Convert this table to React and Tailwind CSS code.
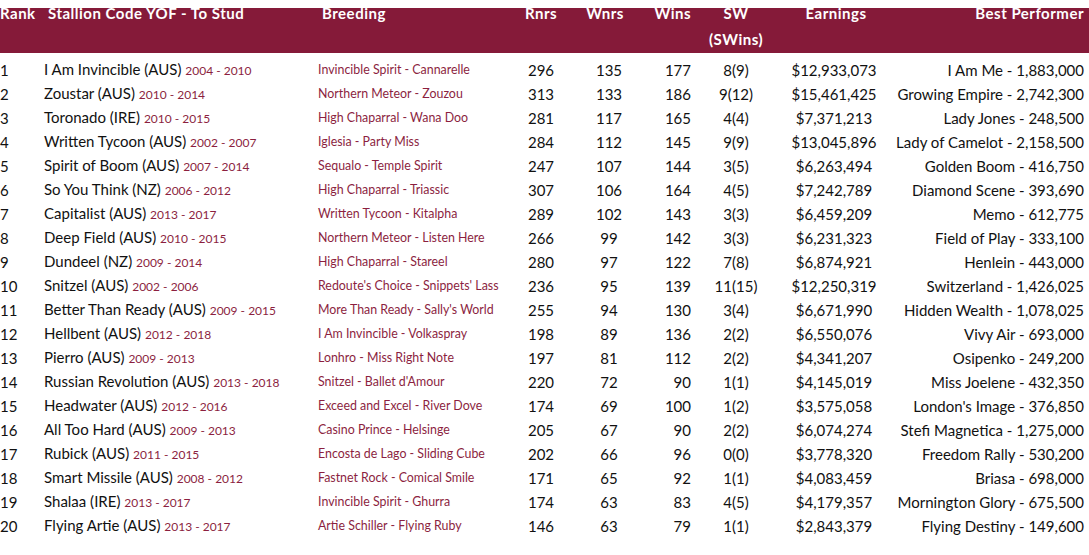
const rows = [
	["I Am Invincible (AUS)", "2004 - 2010", "Invincible Spirit - Cannarelle", "296", "135", "177", "8(9)", "$12,933,073", "I Am Me - 1,883,000"],
	["Zoustar (AUS)", "2010 - 2014", "Northern Meteor - Zouzou", "313", "133", "186", "9(12)", "$15,461,425", "Growing Empire - 2,742,300"],
	["Toronado (IRE)", "2010 - 2015", "High Chaparral - Wana Doo", "281", "117", "165", "4(4)", "$7,371,213", "Lady Jones - 248,500"],
	["Written Tycoon (AUS)", "2002 - 2007", "Iglesia - Party Miss", "284", "112", "145", "9(9)", "$13,045,896", "Lady of Camelot - 2,158,500"],
	["Spirit of Boom (AUS)", "2007 - 2014", "Sequalo - Temple Spirit", "247", "107", "144", "3(5)", "$6,263,494", "Golden Boom - 416,750"],
	["So You Think (NZ)", "2006 - 2012", "High Chaparral - Triassic", "307", "106", "164", "4(5)", "$7,242,789", "Diamond Scene - 393,690"],
	["Capitalist (AUS)", "2013 - 2017", "Written Tycoon - Kitalpha", "289", "102", "143", "3(3)", "$6,459,209", "Memo - 612,775"],
	["Deep Field (AUS)", "2010 - 2015", "Northern Meteor - Listen Here", "266", "99", "142", "3(3)", "$6,231,323", "Field of Play - 333,100"],
	["Dundeel (NZ)", "2009 - 2014", "High Chaparral - Stareel", "280", "97", "122", "7(8)", "$6,874,921", "Henlein - 443,000"],
	["Snitzel (AUS)", "2002 - 2006", "Redoute's Choice - Snippets' Lass", "236", "95", "139", "11(15)", "$12,250,319", "Switzerland - 1,426,025"],
	["Better Than Ready (AUS)", "2009 - 2015", "More Than Ready - Sally's World", "255", "94", "130", "3(4)", "$6,671,990", "Hidden Wealth - 1,078,025"],
	["Hellbent (AUS)", "2012 - 2018", "I Am Invincible - Volkaspray", "198", "89", "136", "2(2)", "$6,550,076", "Vivy Air - 693,000"],
	["Pierro (AUS)", "2009 - 2013", "Lonhro - Miss Right Note", "197", "81", "112", "2(2)", "$4,341,207", "Osipenko - 249,200"],
	["Russian Revolution (AUS)", "2013 - 2018", "Snitzel - Ballet d'Amour", "220", "72", "90", "1(1)", "$4,145,019", "Miss Joelene - 432,350"],
	["Headwater (AUS)", "2012 - 2016", "Exceed and Excel - River Dove", "174", "69", "100", "1(2)", "$3,575,058", "London's Image - 376,850"],
	["All Too Hard (AUS)", "2009 - 2013", "Casino Prince - Helsinge", "205", "67", "90", "2(2)", "$6,074,274", "Stefi Magnetica - 1,275,000"],
	["Rubick (AUS)", "2011 - 2015", "Encosta de Lago - Sliding Cube", "202", "66", "96", "0(0)", "$3,778,320", "Freedom Rally - 530,200"],
	["Smart Missile (AUS)", "2008 - 2012", "Fastnet Rock - Comical Smile", "171", "65", "92", "1(1)", "$4,083,459", "Briasa - 698,000"],
	["Shalaa (IRE)", "2013 - 2017", "Invincible Spirit - Ghurra", "174", "63", "83", "4(5)", "$4,179,357", "Mornington Glory - 675,500"],
	["Flying Artie (AUS)", "2013 - 2017", "Artie Schiller - Flying Ruby", "146", "63", "79", "1(1)", "$2,843,379", "Flying Destiny - 149,600"],
]

const App = () => {
	return (
		<div className="w-[1089px] h-[555px] bg-white overflow-hidden font-['Lato',sans-serif] text-[#111]">
			{/* header band, labels sit on its top edge */}
			<div className="mt-[8px] h-[45px] bg-[#851a39] flow-root">
				<div className="-mt-[8px] flex text-white font-bold text-[15px] tracking-[0.5px] leading-[26px] whitespace-nowrap">
					<div className="w-[44px]">Rank</div>
					<div className="w-[274px] pl-[4px]">Stallion Code YOF - To Stud</div>
					<div className="w-[200px] pl-[4px]">Breeding</div>
					<div className="w-[46px] text-center">Rnrs</div>
					<div className="w-[82px] text-center">Wnrs</div>
					<div className="w-[45px] text-right">Wins</div>
					<div className="w-[90px] text-center">
						SW
						<br />
						(SWins)
					</div>
					<div className="w-[110px] text-center">Earnings</div>
					<div className="w-[193px] text-right">Best Performer</div>
				</div>
			</div>

			<div className="pt-[5px]">
				{rows.map((r, i) => (
					<div key={i} className="flex h-[24px] items-center text-[15px] leading-[24px] whitespace-nowrap">
						<div className="w-[44px]">{i + 1}</div>
						<div className="w-[274px]">
							{r[0]} <span className="text-[12px] text-[#8c1f3f]">{r[1]}</span>
						</div>
						<div className="w-[200px] text-[12.4px] text-[#8c1f3f]">{r[2]}</div>
						<div className="w-[46px] text-center">{r[3]}</div>
						<div className="w-[90px] text-center">{r[4]}</div>
						<div className="w-[37px] text-right">{r[5]}</div>
						<div className="w-[90px] text-center">{r[6]}</div>
						<div className="w-[106px] text-center">{r[7]}</div>
						<div className="w-[197px] text-right">{r[8]}</div>
					</div>
				))}
			</div>
		</div>
	)
}

export default App
